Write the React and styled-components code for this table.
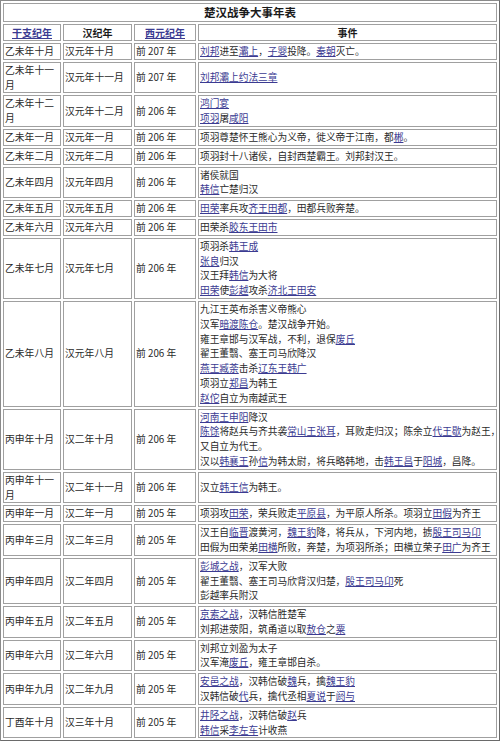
import React from 'react';
import styled, { createGlobalStyle } from 'styled-components';

const GlobalStyle = createGlobalStyle`
  html, body {
    margin: 0;
    padding: 0;
    background: #ffffff;
  }
  body {
    font-family: "Noto Sans CJK SC", "Liberation Sans", sans-serif;
    color: #2a2a2a;
  }
`

const Table = styled.table`
  width: 500px;
  table-layout: fixed;
  border-collapse: separate;
  border-spacing: 2px;
  border: 1px solid #8a8a8a;
  border-right-color: #6a6a6a;
  border-bottom-color: #6a6a6a;
  background: #ffffff;
`

const Col = styled.col`
  width: ${props => props.w}px;
`

const TitleCell = styled.th`
  border: 1px solid #a0a0a0;
  padding: 0;
  height: 17px;
  line-height: 17px;
  font-size: 11.5px;
  font-weight: 700;
  color: #1a1a1a;
  text-align: center;
`

const HeadCell = styled.th`
  border: 1px solid #a0a0a0;
  padding: 0 1px;
  line-height: 15px;
  font-size: 10px;
  font-weight: 700;
  color: #1a1a1a;
  text-align: center;
  white-space: nowrap;
`

const Cell = styled.td`
  border: 1px solid #a0a0a0;
  padding: 0 1px;
  line-height: 14.8px;
  font-size: 9.8px;
  vertical-align: middle;
  text-align: left;
  overflow: hidden;
`

const EventCell = styled(Cell)`
  padding-left: 1px;
  padding-right: 0;
  font-size: 9.7px;
  overflow: visible;
`

const Line = styled.div`
  white-space: nowrap;
`

const Link = styled.a`
  color: #3b3b92;
  text-decoration: underline;
  cursor: pointer;
`

const rows = [
  ['乙未年十月', '汉元年十月', '前 207 年', ['[刘邦]进至[灞上]，[子婴]投降。[秦朝]灭亡。']],
  ['乙未年十一月', '汉元年十一月', '前 207 年', ['[刘邦灞上约法三章]']],
  ['乙未年十二月', '汉元年十二月', '前 206 年', ['[鸿门宴]', '[项羽]屠[咸阳]']],
  ['乙未年一月', '汉元年一月', '前 206 年', ['项羽尊楚怀王熊心为义帝，徙义帝于江南，都[郴]。']],
  ['乙未年二月', '汉元年二月', '前 206 年', ['项羽封十八诸侯，自封西楚霸王。刘邦封汉王。']],
  ['乙未年四月', '汉元年四月', '前 206 年', ['诸侯就国', '[韩信]亡楚归汉']],
  ['乙未年五月', '汉元年五月', '前 206 年', ['[田荣]率兵攻[齐王田都]，田都兵败奔楚。']],
  ['乙未年六月', '汉元年六月', '前 206 年', ['田荣杀[胶东王田市]']],
  ['乙未年七月', '汉元年七月', '前 206 年', [
    '项羽杀[韩王成]',
    '[张良]归汉',
    '汉王拜[韩信]为大将',
    '[田荣]使[彭越]攻杀[济北王田安]',
  ]],
  ['乙未年八月', '汉元年八月', '前 206 年', [
    '九江王英布杀害义帝熊心',
    '汉军[暗渡陈仓]。楚汉战争开始。',
    '雍王章邯与汉军战，不利，退保[废丘]',
    '翟王董翳、塞王司马欣降汉',
    '[燕王臧荼]击杀[辽东王韩广]',
    '项羽立[郑昌]为韩王',
    '[赵佗]自立为南越武王',
  ]],
  ['丙申年十月', '汉二年十月', '前 206 年', [
    '[河南王申阳]降汉',
    '[陈馀]将赵兵与齐共袭[常山王张耳]，耳败走归汉；陈余立[代王歇]为赵王，',
    '又自立为代王。',
    '汉以[韩襄王]孙[信]为韩太尉，将兵略韩地，击[韩王昌]于[阳城]，昌降。',
  ]],
  ['丙申年十一月', '汉二年十一月', '前 206 年', ['汉立[韩王信]为韩王。']],
  ['丙申年一月', '汉二年一月', '前 205 年', ['项羽攻[田荣]，荣兵败走[平原县]，为平原人所杀。项羽立[田假]为齐王']],
  ['丙申年三月', '汉二年三月', '前 205 年', [
    '汉王自[临晋]渡黄河，[魏王豹]降，将兵从，下河内地，掳[殷王司马卬]',
    '田假为田荣弟[田横]所败，奔楚，为项羽所杀；田横立荣子[田广]为齐王',
  ]],
  ['丙申年四月', '汉二年四月', '前 205 年', [
    '[彭城之战]，汉军大败',
    '翟王董翳、塞王司马欣背汉归楚，[殷王司马卬]死',
    '彭越率兵附汉',
  ]],
  ['丙申年五月', '汉二年五月', '前 205 年', [
    '[京索之战]，汉韩信胜楚军',
    '刘邦进荥阳，筑甬道以取[敖仓]之[粟]',
  ]],
  ['丙申年六月', '汉二年六月', '前 205 年', [
    '刘邦立刘盈为太子',
    '汉军淹[废丘]，雍王章邯自杀。',
  ]],
  ['丙申年九月', '汉二年九月', '前 205 年', [
    '[安邑之战]，汉韩信破[魏]兵，擒[魏王豹]',
    '汉韩信破[代]兵，擒代丞相[夏说]于[阏与]',
  ]],
  ['丁酉年十月', '汉三年十月', '前 205 年', [
    '[井陉之战]，汉韩信破[赵]兵',
    '[韩信]采[李左车]计收燕',
  ]],
];

// "[text]" marks a link inside a line
const renderLine = (text) =>
  text.split(/(\[[^\]]+\])/).filter(Boolean).map((part, i) =>
    part.startsWith('[')
      ? <Link key={i}>{part.slice(1, -1)}</Link>
      : <React.Fragment key={i}>{part}</React.Fragment>
  );

const App = () => (
  <>
    <GlobalStyle />
    <Table>
      <colgroup>
        <Col w={58} />
        <Col w={69} />
        <Col w={62} />
        <Col w={299} />
      </colgroup>
      <thead>
        <tr>
          <TitleCell colSpan={4}>楚汉战争大事年表</TitleCell>
        </tr>
        <tr>
          <HeadCell><Link>干支纪年</Link></HeadCell>
          <HeadCell>汉纪年</HeadCell>
          <HeadCell><Link>西元纪年</Link></HeadCell>
          <HeadCell>事件</HeadCell>
        </tr>
      </thead>
      <tbody>
        {rows.map(([ganzhi, han, ad, events]) => (
          <tr key={ganzhi}>
            <Cell>{ganzhi}</Cell>
            <Cell>{han}</Cell>
            <Cell>{ad}</Cell>
            <EventCell>
              {events.map((line, i) => <Line key={i}>{renderLine(line)}</Line>)}
            </EventCell>
          </tr>
        ))}
      </tbody>
    </Table>
  </>
);

export default App;
